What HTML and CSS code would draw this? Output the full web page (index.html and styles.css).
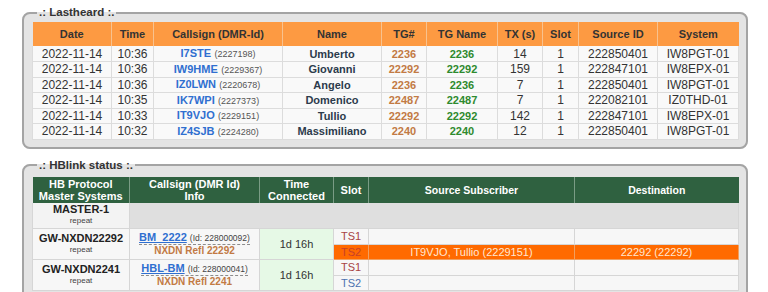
FILE: index.html
```html
<!DOCTYPE html>
<html>
<head>
<meta charset="utf-8">
<link rel="stylesheet" href="styles.css">
</head>
<body>
<div class="page">
  <fieldset class="box">
    <legend>.: Lastheard :.</legend>
    <table class="lh">
      <colgroup>
        <col style="width:79px"><col style="width:42px"><col style="width:129px"><col style="width:99px"><col style="width:45px"><col style="width:71px"><col style="width:45px"><col style="width:36px"><col style="width:79px"><col style="width:81px">
      </colgroup>
      <thead>
        <tr><th>Date</th><th>Time</th><th>Callsign (DMR-Id)</th><th>Name</th><th>TG#</th><th>TG Name</th><th>TX (s)</th><th>Slot</th><th>Source ID</th><th>System</th></tr>
      </thead>
      <tbody>
        <tr><td>2022-11-14</td><td>10:36</td><td><span class="cs">I7STE</span> <span class="id">(2227198)</span></td><td class="nm">Umberto</td><td class="tg">2236</td><td class="tgn">2236</td><td>14</td><td>1</td><td>222850401</td><td>IW8PGT-01</td></tr>
        <tr><td>2022-11-14</td><td>10:36</td><td><span class="cs">IW9HME</span> <span class="id">(2229367)</span></td><td class="nm">Giovanni</td><td class="tg">22292</td><td class="tgn">22292</td><td>159</td><td>1</td><td>222847101</td><td>IW8EPX-01</td></tr>
        <tr><td>2022-11-14</td><td>10:36</td><td><span class="cs">IZ0LWN</span> <span class="id">(2220678)</span></td><td class="nm">Angelo</td><td class="tg">2236</td><td class="tgn">2236</td><td>7</td><td>1</td><td>222850401</td><td>IW8PGT-01</td></tr>
        <tr><td>2022-11-14</td><td>10:35</td><td><span class="cs">IK7WPI</span> <span class="id">(2227373)</span></td><td class="nm">Domenico</td><td class="tg">22487</td><td class="tgn">22487</td><td>7</td><td>1</td><td>222082101</td><td>IZ0THD-01</td></tr>
        <tr><td>2022-11-14</td><td>10:33</td><td><span class="cs">IT9VJO</span> <span class="id">(2229151)</span></td><td class="nm">Tullio</td><td class="tg">22292</td><td class="tgn">22292</td><td>142</td><td>1</td><td>222847101</td><td>IW8EPX-01</td></tr>
        <tr><td>2022-11-14</td><td>10:32</td><td><span class="cs">IZ4SJB</span> <span class="id">(2224280)</span></td><td class="nm">Massimiliano</td><td class="tg">2240</td><td class="tgn">2240</td><td>12</td><td>1</td><td>222850401</td><td>IW8PGT-01</td></tr>
      </tbody>
    </table>
  </fieldset>

  <fieldset class="box box2">
    <legend>.: HBlink status :.</legend>
    <table class="hb">
      <colgroup>
        <col style="width:97px"><col style="width:130px"><col style="width:74px"><col style="width:35px"><col style="width:206px"><col style="width:164px">
      </colgroup>
      <thead>
        <tr><th>HB Protocol<br>Master Systems</th><th>Callsign (DMR Id)<br>Info</th><th>Time<br>Connected</th><th>Slot</th><th class="alt">Source Subscriber</th><th class="alt">Destination</th></tr>
      </thead>
      <tbody>
        <tr class="master"><td class="sys"><b>MASTER-1</b><small>repeat</small></td><td colspan="5" class="empty"></td></tr>
        <tr class="ts"><td rowspan="2" class="sys"><b>GW-NXDN22292</b><small>repeat</small></td><td rowspan="2" class="info"><span class="line"><span class="cs2">BM_2222</span> <span class="idl">(Id: 228000092)</span></span><b class="refl">NXDN Refl 22292</b></td><td rowspan="2" class="time">1d 16h</td><td class="ts1">TS1</td><td></td><td></td></tr>
        <tr class="ts on"><td class="ts2a">TS2</td><td>IT9VJO, Tullio (2229151)</td><td>22292 (22292)</td></tr>
        <tr class="ts"><td rowspan="2" class="sys"><b>GW-NXDN2241</b><small>repeat</small></td><td rowspan="2" class="info"><span class="line"><span class="cs2">HBL-BM</span> <span class="idl">(Id: 228000041)</span></span><b class="refl">NXDN Refl 2241</b></td><td rowspan="2" class="time">1d 16h</td><td class="ts1">TS1</td><td></td><td></td></tr>
        <tr class="ts"><td class="ts2">TS2</td><td></td><td></td></tr>
      </tbody>
    </table>
  </fieldset>
</div>
</body>
</html>
```

FILE: styles.css
```css
html, body {
  margin: 0;
  padding: 0;
  background: #ffffff;
}
body {
  font-family: "Liberation Sans", Arial, sans-serif;
  color: #333;
  overflow: hidden;
}
.page {
  padding: 6px 20px 0 22px;
}
.box {
  margin: 0;
  border: 2px solid #a4a4a4;
  border-radius: 8px;
  background: #e4e4e4;
  padding: 3px 8px 7px 8px;
  min-width: 0;
}
.box legend {
  font-size: 11.5px;
  font-weight: bold;
  color: #333;
  padding: 0 2px;
  margin-left: 5px;
  line-height: 13px;
}
.box2 {
  margin-top: 10px;
  padding-top: 5px;
}
table {
  border-collapse: collapse;
  table-layout: fixed;
  width: 706px;
}
td, th {
  padding: 0;
  text-align: center;
  overflow: hidden;
  white-space: nowrap;
}
.lh th {
  background: #fd9a42;
  color: #333;
  font-size: 11px;
  font-weight: bold;
  height: 24px;
  border-left: 1px solid #f8c28e;
}
.lh th:first-child { border-left: none; }
.lh tbody tr { height: 15.5px; }
.lh td {
  background: #f9f9f9;
  border: 1px solid #dcdcdc;
  font-size: 12px;
  line-height: 12px;
}
.lh tr:first-child td { border-top: none; }
.cs {
  color: #2f6fd0;
  font-weight: bold;
  font-size: 11px;
}
.id {
  font-size: 9px;
  color: #555;
}
.nm {
  font-weight: bold;
  font-size: 11px !important;
  color: #2c3b4c;
}
.tg {
  font-weight: bold;
  font-size: 11px !important;
  color: #c27a44;
}
.tgn {
  font-weight: bold;
  font-size: 11px !important;
  color: #2e8a2e;
}

.hb th {
  background: #2f6140;
  color: #fff;
  font-size: 11px;
  font-weight: bold;
  line-height: 12px;
  height: 26px;
  border-left: 1px solid #7a9c85;
}
.hb th:first-child { border-left: none; }
.hb th.alt {
  font-size: 10.5px;
}
.hb td {
  border: 1px solid #d6d6d6;
  background: #f7f7f7;
  font-size: 11px;
}
.hb tbody tr:first-child td { border-top: none; }
.sys {
  line-height: 11px;
}
.sys b {
  display: block;
  font-size: 11px;
  color: #222;
}
.sys small {
  display: block;
  font-size: 8px;
  color: #444;
}
.master { height: 26px; }
.master .sys { background: #f3f3f3; }
.master .empty { background: #dfdfdf; }
.ts { height: 15.5px; }
.ts td { line-height: 12px; }
.info {
  line-height: 12px;
}
.info .line {
  display: inline-block;
  border-bottom: 1px dashed #8c8c8c;
  line-height: 11px;
}
.cs2 {
  color: #2f6fd0;
  font-size: 11px;
  font-weight: bold;
  text-decoration: underline;
}
.idl {
  font-size: 8.5px;
  color: #444;
}
.refl {
  display: block;
  color: #c27a44;
  font-size: 10px;
}
.hb td.time {
  background: #e6f9e6;
  font-size: 11px;
}
.ts1 { color: #a84444; }
.ts2 { color: #4d72b0; }
.hb .on td {
  background: #ff6a00;
  color: #ffe7d2;
  border-color: #f0a060;
}
.hb .on td.ts2a { color: #c8402a; }
```
